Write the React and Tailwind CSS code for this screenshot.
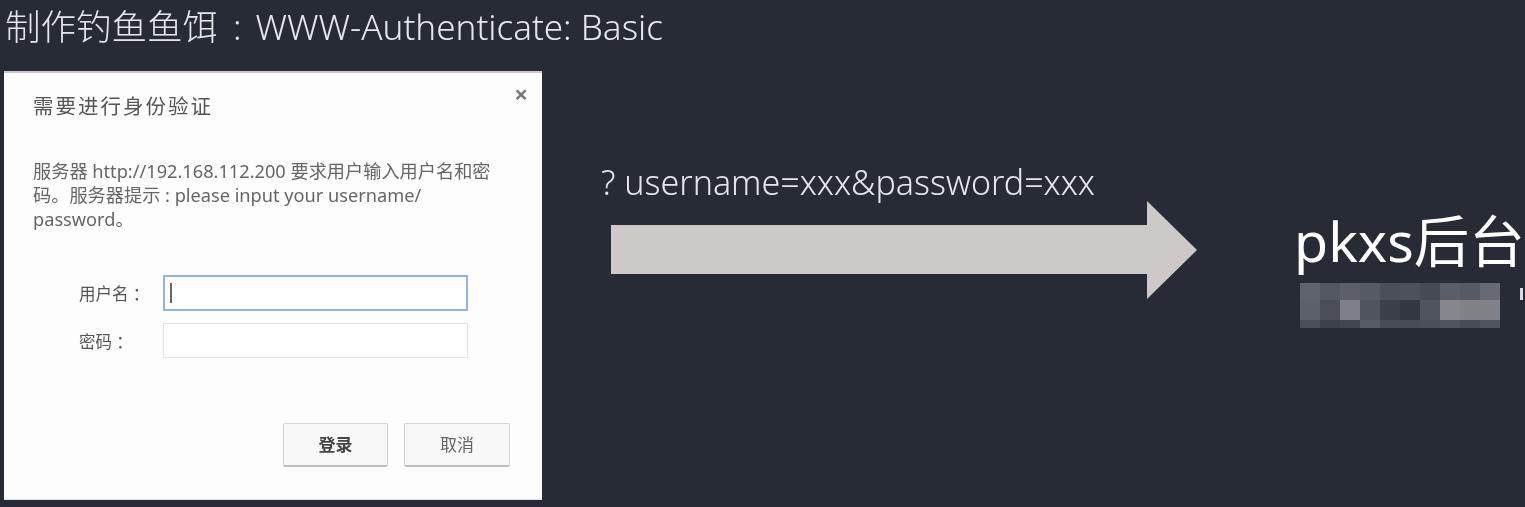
const MOSAIC = [
  ['#5f636b', '#545860', '#5b5f68', '#565a62', '#4b4f58', '#4b525b', '#464a53', '#5a5e67', '#565a63', '#666a72'],
  ['#5d6169', '#4a4e56', '#7d8088', '#50545c', '#3c4049', '#333740', '#50545c', '#85878c', '#808288', '#808288'],
  ['#4a4e57', '#3d414a', '#41454e', '#575b64', '#484c55', '#484c55', '#4b4f58', '#50545c', '#484c55', '#50545c'],
]

function Field({ label, focused }) {
  return (
    <div className="flex items-center">
      <span className="w-[84px] mt-[3px] text-[16.5px] text-[#555] whitespace-nowrap">{label}</span>
      {focused ? (
        <div className="w-[305px] h-[36px] bg-white border-2 border-[#8fb4e8] rounded-[1px] flex items-center pl-[5px]">
          <span className="w-[2px] h-[20px] bg-[#666]" />
        </div>
      ) : (
        <div className="w-[305px] h-[35px] bg-white border border-[#e2e2e2]" />
      )}
    </div>
  )
}

function LoginDialog() {
  return (
    <div className="relative w-[538px] h-[429px] ml-1 bg-[#fdfdfd] border-t-2 border-b border-t-[#c9cbce] border-b-[#d5e3ee] flex flex-col pl-[29px] pr-[32px] pt-[19px] text-[#666]">
      <span className="absolute right-[14px] top-[9px] text-[#777] text-[24px] font-bold leading-6">×</span>
      <h2 className="text-[20.5px] leading-[28px] text-[#555] tracking-[2px]">需要进行身份验证</h2>
      <p className="mt-[39px] text-[18.2px] leading-[24px] text-[#666] whitespace-nowrap">
        服务器 http://192.168.112.200 要求用户输入用户名和密
        <br />
        码。服务器提示 : please input your username/
        <br />
        password。
      </p>
      <div className="mt-[44px] ml-[46px] flex flex-col gap-[12px]">
        <Field label="用户名 ：" focused />
        <Field label="密码 ：" />
      </div>
      <div className="mt-[65px] flex justify-end gap-[16px]">
        <button className="w-[105px] h-[44px] bg-[#f8f8f8] border border-[#d5d5d5] border-b-2 border-b-[#bdbdbd] rounded-[2px] text-[17px] text-[#444] font-bold">
          登录
        </button>
        <button className="w-[106px] h-[44px] bg-[#f8f8f8] border border-[#d5d5d5] border-b-2 border-b-[#bdbdbd] rounded-[2px] text-[17px] text-[#666]">
          取消
        </button>
      </div>
    </div>
  )
}

export default function App() {
  return (
    <div
      className="w-[1525px] h-[507px] overflow-hidden bg-[#272b35] text-[#e4e7ea] flex flex-col blur-[0.4px]"
      style={{ fontFamily: '"Noto Sans", "Noto Sans CJK SC", sans-serif' }}
    >
      <h1 className="h-[71px] pl-[5px] pt-[3px] text-[35px] font-light leading-[46px] whitespace-nowrap">
        <span className="text-[35.5px]">制作钓鱼鱼饵</span>
        <span className="ml-[15px] mr-[14px]">:</span>WWW-Authenticate: Basic
      </h1>

      <div className="flex items-start">
        <LoginDialog />

        <div className="ml-[59px] w-[596px] pt-[88px] shrink-0">
          <p className="text-[34px] font-light leading-[46px] whitespace-nowrap">? username=xxx&amp;password=xxx</p>
          <svg className="ml-[10px] mt-[-4px]" width="586" height="98" viewBox="0 0 586 98">
            <path d="M0 24H536V0L586 49L536 98V73H0Z" fill="#cdc9c9" />
          </svg>
        </div>

        <div className="ml-[97px] pt-[130px] shrink-0 w-[229px]">
          <p className="text-[55.5px] leading-[80px] text-white whitespace-nowrap">pkxs后台</p>
          <div className="mt-[2px] flex items-start">
            <div className="ml-[6px] shrink-0 grid grid-cols-[repeat(10,20px)] grid-rows-[17px_20px_8px] w-[200px]">
              {MOSAIC.flat().map((color, i) => (
                <span key={i} style={{ backgroundColor: color }} />
              ))}
            </div>
            <span className="ml-[20px] mt-[5px] w-[6px] h-[12px] bg-[#d9dbde]" />
          </div>
        </div>
      </div>
    </div>
  )
}
